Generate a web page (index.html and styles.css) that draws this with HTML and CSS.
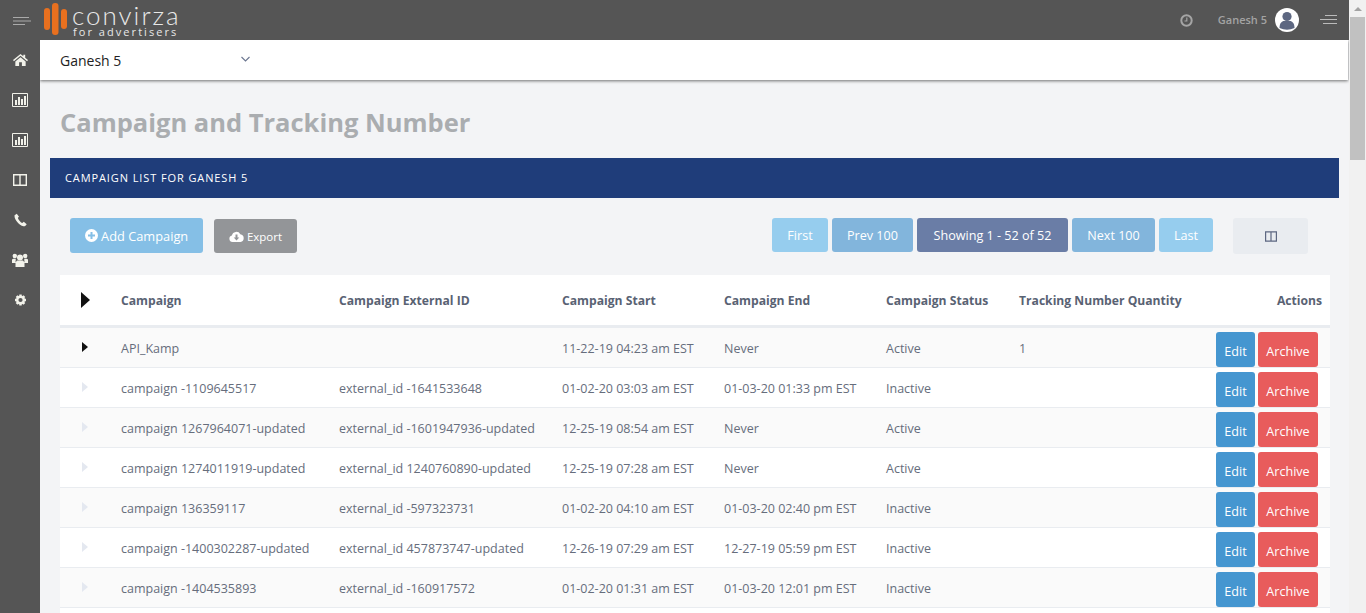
FILE: index.html
```html
<!DOCTYPE html>
<html lang="en">
<head>
    <meta charset="UTF-8">
    <title>Campaign and Tracking Number</title>
    <link rel="stylesheet" href="styles.css">
</head>
<body>
<div class="window">
  <div class="page">
    <!-- top bar -->
    <header class="topbar">
      <div class="burger-cell">
        <svg class="burger" width="18" height="8" viewBox="0 0 18 8"><path d="M0 .5H16M0 4H18M0 7.500H12" stroke="#aaa" fill="none"/></svg>
      </div>
      <div class="logo">
        <svg width="23" height="32" viewBox="0 0 23 32"><rect x="0" y="5" width="6" height="22" rx="3" fill="#e8701f"/><rect x="8" y="0" width="6.500" height="32" rx="3" fill="#e8701f"/><rect x="17" y="6" width="6" height="20" rx="3" fill="#e8701f"/></svg>
        <div class="logo-text">
          <span class="logo-name">convirza</span>
          <span class="logo-sub">for advertisers</span>
        </div>
      </div>
      <div class="top-right">
        <svg class="clock" width="13" height="13" viewBox="0 0 13 13"><circle cx="6.500" cy="6.500" r="5.200" fill="none" stroke="#a5a5a5" stroke-width="2"/><path d="M6.800 3.500V7H4.500" fill="none" stroke="#a5a5a5" stroke-width="1.200"/></svg>
        <span class="user-name">Ganesh 5</span>
        <svg class="avatar" width="24" height="24" viewBox="0 0 24 24"><circle cx="12" cy="12" r="12" fill="#fff"/><circle cx="12" cy="8.500" r="4.600" fill="#5d6781"/><path d="M4.500 20c0-5 2.500-7 4.500-7h6c2 0 4.500 2 4.500 7q-7.500 3.500-15 0z" fill="#5d6781"/></svg>
        <svg class="burger-right" width="17" height="10" viewBox="0 0 17 10"><path d="M5 .5H17M0 4.500H17M3 8.500H17" stroke="#bbb" fill="none"/></svg>
      </div>
    </header>

    <div class="below">
      <!-- sidebar -->
      <nav class="sidebar">
        <svg class="side-icon" width="15" height="13" viewBox="0 0 16 13"><path d="M8 0 0 6.500 1 7.700 8 2l7 5.700 1-1.200-3-2.400V.8h-2v1.700zM2.500 8 8 3.500 13.500 8v5H9.500V9h-3v4h-4z" fill="#f2f2ea"/></svg>
        <svg class="side-icon" width="16" height="14" viewBox="0 0 16 14"><path d="M.5.5h15v13H.5z" fill="none" stroke="#f2f2ea"/><path d="M3 7h2v5H3zM6 4h2v8H6zM9 6h2v6H9zM12 3h2v9h-2z" fill="#f2f2ea"/></svg>
        <svg class="side-icon" width="16" height="14" viewBox="0 0 16 14"><path d="M.5.5h15v13H.5z" fill="none" stroke="#f2f2ea"/><path d="M3 7h2v5H3zM6 4h2v8H6zM9 6h2v6H9zM12 3h2v9h-2z" fill="#f2f2ea"/></svg>
        <svg class="side-icon" width="14" height="12" viewBox="0 0 14 12"><path d="M.7.7h12.600v10.600H.7zM7 .7v10.600" fill="none" stroke="#f2f2ea" stroke-width="1.400"/></svg>
        <svg class="side-icon" width="13" height="13" viewBox="0 0 13 13"><path d="M2.800.2.600 1.800C-.2 5 4.500 12 9.500 12.800c1.200.2 2.500-.6 3.200-2L9.800 8.300 8.300 9.600C6.500 9 4.200 6 3.900 4.300L5 3.200z" fill="#f2f2ea"/></svg>
        <svg class="side-icon" width="16" height="14" viewBox="0 0 16 14"><circle cx="8" cy="4.500" r="3" fill="#f2f2ea"/><circle cx="2.800" cy="3" r="2.200" fill="#f2f2ea"/><circle cx="13.200" cy="3" r="2.200" fill="#f2f2ea"/><path d="M0 10V6.500L1.200 5.800h2.600L3.500 10zM16 10V6.500l-1.200-.7h-2.600l.3 4.200zM3.500 14V9.500L5 7.500h6l1.500 2V14z" fill="#f2f2ea"/></svg>
        <svg class="side-icon" width="13" height="13" viewBox="0 0 13 13"><path d="M6.500 1v11M1 6.500h11M2.600 2.600l7.800 7.800M10.400 2.600l-7.800 7.800" stroke="#f2f2ea" stroke-width="2.400"/><circle cx="6.500" cy="6.500" r="3.300" fill="#555" stroke="#f2f2ea" stroke-width="2.400"/></svg>
      </nav>

      <main class="content">
        <div class="account-bar">
          <span class="account-name">Ganesh 5</span>
          <svg class="account-caret" width="9" height="6" viewBox="0 0 9 6"><path d="M.5 1 4.500 5l4-4" fill="none" stroke="#6b7690" stroke-width="1.100"/></svg>
        </div>

        <h1 class="page-title">Campaign and Tracking Number</h1>

        <div class="panel-head">CAMPAIGN LIST FOR GANESH 5</div>

        <div class="toolbar">
          <button class="btn btn-add">
            <svg width="13" height="13" viewBox="0 0 13 13"><circle cx="6.500" cy="6.500" r="6.500" fill="#fff"/><path d="M6.500 3v7M3 6.500h7" stroke="#85bfe6" stroke-width="2"/></svg>
            Add Campaign
          </button>
          <button class="btn btn-export">
            <svg width="15" height="11" viewBox="0 0 15 11"><path d="M3.500 11a3.300 3.300 0 0 1-.6-6.500A4.500 4.500 0 0 1 11.300 3.300 3.900 3.900 0 0 1 11.500 11z" fill="#fff"/><path d="M6.500 3.500h2v3h1.800L7.500 9.500 4.700 6.500h1.800z" fill="#939598"/></svg>
            Export
          </button>
          <div class="pager">
            <button class="btn pg pg-end">First</button>
            <button class="btn pg pg-step">Prev 100</button>
            <button class="btn pg pg-now">Showing 1 - 52 of 52</button>
            <button class="btn pg pg-step">Next 100</button>
            <button class="btn pg pg-end">Last</button>
          </div>
          <button class="btn btn-columns">
            <svg width="12" height="11" viewBox="0 0 14 12"><path d="M.7.7h12.600v10.600H.7zM7 .7v10.600" fill="none" stroke="#5d6781" stroke-width="1.400"/></svg>
          </button>
        </div>

        <table class="campaigns">
          <thead>
            <tr>
              <th class="col-caret"><span class="caret caret-big"></span></th>
              <th class="col-name">Campaign</th>
              <th class="col-ext">Campaign External ID</th>
              <th class="col-start">Campaign Start</th>
              <th class="col-end">Campaign End</th>
              <th class="col-status">Campaign Status</th>
              <th class="col-qty">Tracking Number Quantity</th>
              <th class="col-actions">Actions</th>
            </tr>
          </thead>
          <tbody>
            <tr>
              <td><span class="caret caret-dark"></span></td>
              <td>API_Kamp</td><td></td><td>11-22-19 04:23 am EST</td><td>Never</td><td>Active</td><td>1</td>
              <td class="actions"><button class="btn act-edit">Edit</button><button class="btn act-archive">Archive</button></td>
            </tr>
            <tr>
              <td><span class="caret"></span></td>
              <td>campaign -1109645517</td><td>external_id -1641533648</td><td>01-02-20 03:03 am EST</td><td>01-03-20 01:33 pm EST</td><td>Inactive</td><td></td>
              <td class="actions"><button class="btn act-edit">Edit</button><button class="btn act-archive">Archive</button></td>
            </tr>
            <tr>
              <td><span class="caret"></span></td>
              <td>campaign 1267964071-updated</td><td>external_id -1601947936-updated</td><td>12-25-19 08:54 am EST</td><td>Never</td><td>Active</td><td></td>
              <td class="actions"><button class="btn act-edit">Edit</button><button class="btn act-archive">Archive</button></td>
            </tr>
            <tr>
              <td><span class="caret"></span></td>
              <td>campaign 1274011919-updated</td><td>external_id 1240760890-updated</td><td>12-25-19 07:28 am EST</td><td>Never</td><td>Active</td><td></td>
              <td class="actions"><button class="btn act-edit">Edit</button><button class="btn act-archive">Archive</button></td>
            </tr>
            <tr>
              <td><span class="caret"></span></td>
              <td>campaign 136359117</td><td>external_id -597323731</td><td>01-02-20 04:10 am EST</td><td>01-03-20 02:40 pm EST</td><td>Inactive</td><td></td>
              <td class="actions"><button class="btn act-edit">Edit</button><button class="btn act-archive">Archive</button></td>
            </tr>
            <tr>
              <td><span class="caret"></span></td>
              <td>campaign -1400302287-updated</td><td>external_id 457873747-updated</td><td>12-26-19 07:29 am EST</td><td>12-27-19 05:59 pm EST</td><td>Inactive</td><td></td>
              <td class="actions"><button class="btn act-edit">Edit</button><button class="btn act-archive">Archive</button></td>
            </tr>
            <tr>
              <td><span class="caret"></span></td>
              <td>campaign -1404535893</td><td>external_id -160917572</td><td>01-02-20 01:31 am EST</td><td>01-03-20 12:01 pm EST</td><td>Inactive</td><td></td>
              <td class="actions"><button class="btn act-edit">Edit</button><button class="btn act-archive">Archive</button></td>
            </tr>
            <tr>
              <td></td><td></td><td></td><td></td><td></td><td></td><td></td>
              <td class="actions"></td>
            </tr>
          </tbody>
        </table>
      </main>
    </div>
  </div>

  <!-- scrollbar -->
  <div class="scrollbar">
    <span class="scroll-up"></span>
    <span class="scroll-thumb"></span>
  </div>
</div>
</body>
</html>
```

FILE: styles.css
```css
/* general */
html, body {
    margin: 0;
    padding: 0;
    height: 100%;
    overflow: hidden;
}

body {
    font-family: "Open Sans", Arial, sans-serif;
    font-size: 12.5px;
    color: #666d7c;
    background-color: #f3f4f6;
}

.window {
    display: flex;
    height: 613px;
    overflow: hidden;
}

.page {
    flex: 1;
    min-width: 0;
    display: flex;
    flex-direction: column;
}

/* top bar */
.topbar {
    flex: none;
    height: 40px;
    display: flex;
    align-items: flex-start;
    background-color: #555;
}

.burger-cell {
    width: 40px;
    height: 40px;
    display: flex;
    align-items: center;
    padding: 2px 0 0 13px;
    box-sizing: border-box;
}

.logo {
    display: flex;
    gap: 5px;
    margin: 3px 0 0 4px;
}

.logo-text {
    display: flex;
    flex-direction: column;
    color: #e8e8e8;
}

.logo-name {
    font-family: "Lato", sans-serif;
    font-weight: 300;
    font-size: 26px;
    line-height: 24px;
    letter-spacing: 2px;
}

.logo-sub {
    font-size: 11px;
    line-height: 10px;
    letter-spacing: 2.050px;
    margin-left: 1px;
}

.top-right {
    margin-left: auto;
    height: 40px;
    display: flex;
    align-items: center;
    padding-right: 12px;
}

.clock {
    margin-right: 25px;
    margin-top: 1px;
}

.user-name {
    font-size: 11px;
    font-weight: 600;
    color: #a3a3a3;
    margin: -1px 8px 0 0;
}

.burger-right {
    margin-left: 21px;
}

/* sidebar */
.below {
    flex: 1;
    min-height: 0;
    display: flex;
}

.sidebar {
    flex: none;
    width: 40px;
    display: flex;
    flex-direction: column;
    align-items: center;
    padding-top: 13px;
    background-color: #555;
}

.side-icon {
    height: 14px;
    margin-bottom: 26px;
}

/* main */
.content {
    flex: 1;
    min-width: 0;
    overflow: hidden;
}

.account-bar {
    height: 40px;
    margin-right: 1px;
    display: flex;
    align-items: center;
    padding-left: 20px;
    background-color: #fff;
    box-shadow: 0 1px 3px rgba(0, 0, 0, 0.55);
}

.account-name {
    width: 181px;
    font-size: 14px;
    color: #222;
}

.account-caret {
    margin-top: -3px;
}

.page-title {
    margin: 24px 0 18px 20px;
    font-size: 25.500px;
    line-height: 36px;
    font-weight: 700;
    color: #aaadb0;
}

.panel-head {
    height: 40px;
    margin: 0 10px;
    padding-left: 15px;
    line-height: 40px;
    font-size: 11px;
    letter-spacing: 0.900px;
    color: #fff;
    background-color: #1f3d7a;
}

/* buttons */
.btn {
    border: none;
    border-radius: 3px;
    padding: 0;
    font-family: inherit;
    color: #fff;
    cursor: pointer;
}

.toolbar {
    display: flex;
    align-items: flex-start;
    height: 77px;
    padding: 20px 0 0 30px;
    box-sizing: border-box;
}

.btn-add {
    width: 133px;
    height: 35px;
    font-size: 12.800px;
    background-color: #85bfe6;
}

.btn-add svg {
    vertical-align: -1px;
}

.btn-export {
    width: 83px;
    height: 34px;
    margin: 1px 0 0 11px;
    font-size: 11.500px;
    background-color: #939598;
}

.btn-export svg {
    vertical-align: -1px;
}

.pager {
    display: flex;
    gap: 4px;
    margin-left: 475px;
}

.pg {
    height: 34px;
    font-size: 12.600px;
}

.pg-end {
    background-color: #96cdee;
}

.pg-step {
    background-color: #82b5dc;
}

.pg-now {
    background-color: #6a7da6;
}

.pg-end:first-child {
    width: 56px;
}

.pg-end:last-child {
    width: 54px;
}

.pg-step {
    width: 81px;
}

.pg-step:nth-child(4) {
    width: 83px;
}

.pg-now {
    width: 151px;
}

.btn-columns {
    width: 75px;
    height: 36px;
    margin-left: 20px;
    padding-top: 2px;
    background-color: #e9ecf0;
}

/* table */
.campaigns {
    width: 1270px;
    margin-left: 20px;
    table-layout: fixed;
    border-collapse: collapse;
    background-color: #fff;
}

.campaigns th {
    height: 50px;
    padding: 0 0 0 10px;
    text-align: left;
    font-size: 12.150px;
    font-weight: 700;
    color: #596273;
    border-bottom: 3px solid #e9ecf0;
}

.campaigns td {
    height: 40px;
    box-sizing: border-box;
    padding: 2px 0 0 10px;
    white-space: nowrap;
    border-bottom: 1px solid #e9ecf0;
}

.campaigns tbody tr:nth-child(odd) {
    background-color: #fafafa;
}

.col-caret { width: 41px; }
.col-name { width: 208px; }
.col-ext { width: 213px; }
.col-start { width: 152px; }
.col-end { width: 152px; }
.col-status { width: 123px; }
.col-qty { width: 181px; }

.campaigns th.col-actions {
    text-align: right;
    padding-right: 8px;
}

.caret {
    display: block;
    width: 0;
    height: 0;
    margin-left: 12px;
    margin-top: -4px;
    border-style: solid;
    border-width: 5.500px 0 5.500px 6px;
    border-color: transparent transparent transparent #e4e8f0;
}

.caret-dark {
    border-width: 5px 0 5px 6px;
    border-left-color: #111;
}

.caret-big {
    margin-top: 0;
    margin-left: 11px;
    border-width: 8px 0 8px 9px;
    border-left-color: #111;
}

.campaigns td.actions {
    padding: 4px 12px 0 0;
    text-align: right;
    vertical-align: top;
    font-size: 0;
    line-height: 0;
}

.act-edit,
.act-archive {
    height: 35px;
    padding-top: 4px;
    vertical-align: top;
    font-size: 12.600px;
    line-height: 16px;
}

.act-edit {
    width: 39px;
    background-color: #4596d0;
}

.act-archive {
    width: 60px;
    margin-left: 3px;
    background-color: #e85c5c;
}

/* fake scrollbar */
.scrollbar {
    flex: none;
    width: 17px;
    display: flex;
    flex-direction: column;
    align-items: center;
    background-color: #f1f1f1;
}

.scroll-up {
    width: 0;
    height: 0;
    margin: 7px 0 6px;
    border-style: solid;
    border-width: 0 4px 4px;
    border-color: transparent transparent #a3a3a3;
}

.scroll-thumb {
    width: 15px;
    height: 143px;
    background-color: #c1c1c1;
}
```
